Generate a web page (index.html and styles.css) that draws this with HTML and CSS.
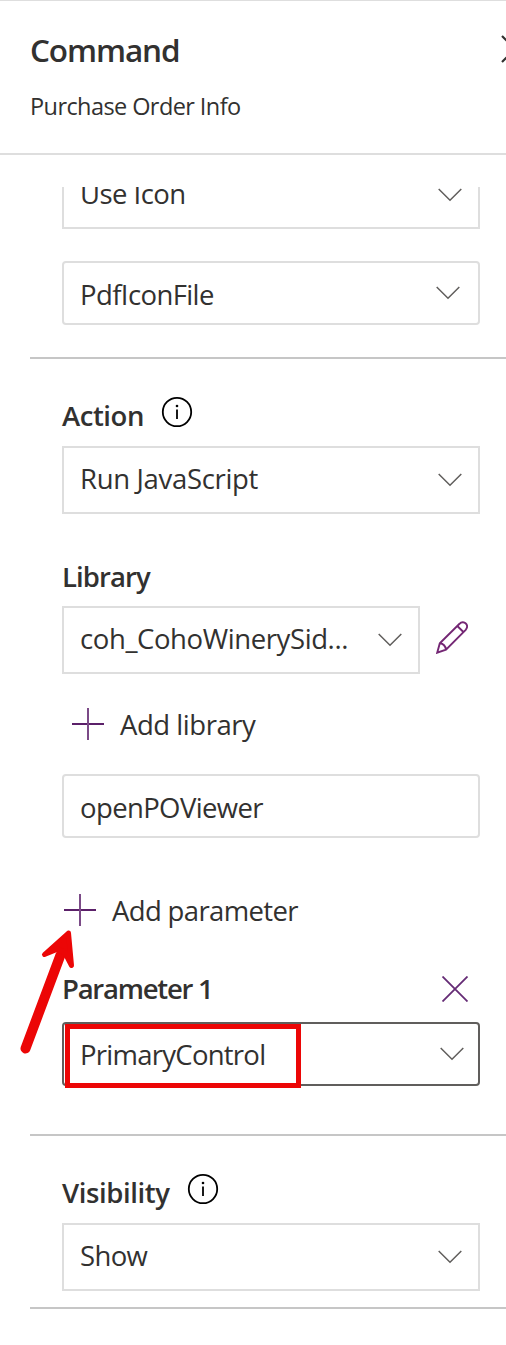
FILE: index.html
```html
<!DOCTYPE html>
<html lang="en">
<head>
<meta charset="utf-8">
<title>Command</title>
<link rel="stylesheet" href="styles.css">
</head>
<body>
<svg class="symbols" aria-hidden="true">
  <symbol id="chevron" viewBox="0 0 24 14"><path d="M.7 1 12 12.3 23.3 1" fill="none" stroke="#605e5c" stroke-width="1.5"/></symbol>
  <symbol id="plus" viewBox="0 0 32 32"><path d="M0 16H32" stroke="#5b2069" stroke-width="2"/><path d="M16 0V32" stroke="#7b4a87" stroke-width="2"/></symbol>
  <symbol id="info" viewBox="0 0 32 32"><circle cx="16" cy="16" r="14.2" fill="none" stroke="#000" stroke-width="1.8"/><path d="M16 13.4V23" stroke="#000" stroke-width="1.8"/><circle cx="16" cy="10" r="1.3"/></symbol>
</svg>
<main class="panel">
  <header class="header">
    <div class="title-row">
      <h1 class="title">Command</h1>
      <svg class="close" viewBox="0 0 28 28"><path d="M1 1 27 27M27 1 1 27" stroke="#323130" stroke-width="2.2"/></svg>
    </div>
    <p class="subtitle">Purchase Order Info</p>
  </header>
  <div class="scroll">
    <section class="section icon-section">
      <div class="select"><span class="t-use">Use Icon</span><svg class="chevron"><use href="#chevron"/></svg></div>
      <div class="combo"><span class="t-pdf">PdfIconFile</span><svg class="chevron"><use href="#chevron"/></svg></div>
    </section>
    <section class="section action-section">
      <div class="label-row"><h2 class="label t-action">Action</h2><svg class="info"><use href="#info"/></svg></div>
      <div class="select"><span class="t-run">Run JavaScript</span><svg class="chevron"><use href="#chevron"/></svg></div>
      <h2 class="label library-label t-lib">Library</h2>
      <div class="library-row">
        <div class="select"><span class="t-coh">coh_CohoWinerySid...</span><svg class="chevron"><use href="#chevron"/></svg></div>
        <svg class="pencil" viewBox="0 0 32 33"><path d="M1.2 31.7 3.8 22.3 23.5 2.8C25.3.8 28.2.7 29.8 2.5 31.7 4.2 31.5 6.8 29.7 8.8L10 28.7ZM21.3 5 27.4 11M3.8 22.3C7.2 22.8 9.5 25.1 10 28.7" fill="none" stroke="#742774" stroke-width="1.9"/></svg>
      </div>
      <div class="add add-library"><svg class="plus"><use href="#plus"/></svg><span class="t-addlib">Add library</span></div>
      <div class="combo function"><span class="t-open">openPOViewer</span></div>
      <div class="add add-parameter"><svg class="plus"><use href="#plus"/></svg><span class="t-addpar">Add parameter</span></div>
      <div class="parameter-row"><h2 class="label t-par">Parameter 1</h2><svg class="remove" viewBox="0 0 26 26"><path d="M.5.5 25.5 25.5M25.5.5.5 25.5" stroke="#652b75" stroke-width="1.8"/></svg></div>
      <div class="combo active"><span class="t-prim">PrimaryControl</span><svg class="chevron"><use href="#chevron"/></svg><div class="highlight"></div>
        <svg class="arrow" viewBox="0 0 60 128"><path d="M5.5 119.5 40.5 26" fill="none" stroke="#ec0606" stroke-width="10" stroke-linecap="round"/><path d="M48.5 4 24.5 25.5 38 20 45 24 51.5 36.5Z" fill="#ec0606" stroke="#ec0606" stroke-width="5" stroke-linejoin="round"/></svg>
      </div>
    </section>
    <section class="section visibility-section">
      <div class="label-row"><h2 class="label t-vis">Visibility</h2><svg class="info"><use href="#info"/></svg></div>
      <div class="select"><span class="t-show">Show</span><svg class="chevron"><use href="#chevron"/></svg></div>
    </section>
  </div>
</main>
</body>
</html>
```
FILE: styles.css
```css
* { box-sizing: border-box; }
body { margin: 0; background: #fff; color: #323130; font: 400 27.5px/38px "Open Sans", sans-serif; }
h1, h2, p { margin: 0; }
svg { display: block; flex: none; }
.symbols { position: absolute; width: 0; height: 0; }
.panel { height: 1345px; overflow: hidden; border-top: 1px solid #dedede; }
.header { height: 154px; padding: 28px 0 0 30px; border-bottom: 2px solid #dedede; }
.title-row { display: flex; justify-content: space-between; overflow: hidden; }
.title { font-size: 31.5px; line-height: 42px; font-weight: 600; letter-spacing: -1.1px; }
.close { width: 28px; height: 28px; margin: 6px -23px 0 0; }
.subtitle { margin-top: 18px; font-size: 23.5px; line-height: 34px; letter-spacing: -.58px; }
.scroll { margin-top: 32px; overflow: hidden; }
.section { margin-left: 30px; padding: 0 26px 0 32px; border-bottom: 2px solid #c6c6c6; }
.select, .combo { display: flex; align-items: center; justify-content: space-between; border: 2px solid #dedede; padding: 0 16px; white-space: nowrap; }
.select { height: 68px; padding-bottom: 2px; }
.select .chevron { margin-top: 2px; }
.combo { height: 64px; border-radius: 4px; }
.combo .chevron { margin-right: 2px; }
.chevron { width: 24px; height: 14px; }
.icon-section { height: 198px; margin-top: -26px; }
.icon-section .combo { margin-top: 32px; padding-top: 3px; }
.icon-section .combo .chevron { margin-bottom: 4px; }
.action-section { height: 777px; padding-top: 37px; }
.label { font-size: 27.5px; line-height: 38px; font-weight: 600; position: relative; top: 1px; }
.label-row { display: flex; gap: 17px; height: 50px; }
.info { width: 32px; height: 32px; }
.library-label { margin: 43px 0 11px; }
.library-row { display: flex; gap: 16px; }
.library-row .select { width: 358px; }
.pencil { width: 32px; height: 33px; margin-top: 15px; }
.add { display: flex; gap: 16px; line-height: 40px; height: 38px; }
.add-library { margin: 31px 0 0 10px; }
.plus { width: 32px; height: 32px; margin-top: 3px; }
.function { margin-top: 31px; padding-top: 3px; }
.add-parameter { margin: 53px 0 0 2px; }
.parameter-row { display: flex; justify-content: space-between; margin-top: 40px; height: 53px; }
.remove { width: 26px; height: 26px; margin: 7px 12px 0 0; }
.active { position: relative; border-color: #605e5c; padding-top: 1px; }
.active .chevron { margin: 0 -2px 1px 0; }
.highlight { position: absolute; left: 1px; top: 0; width: 236px; height: 64px; border: 5px solid #ec0606; }
.arrow { position: absolute; left: -44px; top: -95px; width: 60px; height: 128px; }
.visibility-section { height: 173px; padding-top: 37px; }

/* Letter fitting per text */
.t-use { letter-spacing: -.55px; }
.t-pdf { letter-spacing: -.6px; }
.t-action { letter-spacing: -.45px; }
.t-run { letter-spacing: -.33px; }
.t-lib { letter-spacing: -.9px; }
.t-coh { letter-spacing: -.4px; }
.t-addlib { letter-spacing: -.46px; }
.t-open { letter-spacing: -.62px; }
.t-addpar { letter-spacing: -.64px; }
.t-par { letter-spacing: -1.25px; }
.t-prim { letter-spacing: -.74px; }
.t-vis { letter-spacing: -.4px; }
.t-show { letter-spacing: -.65px; }
```
